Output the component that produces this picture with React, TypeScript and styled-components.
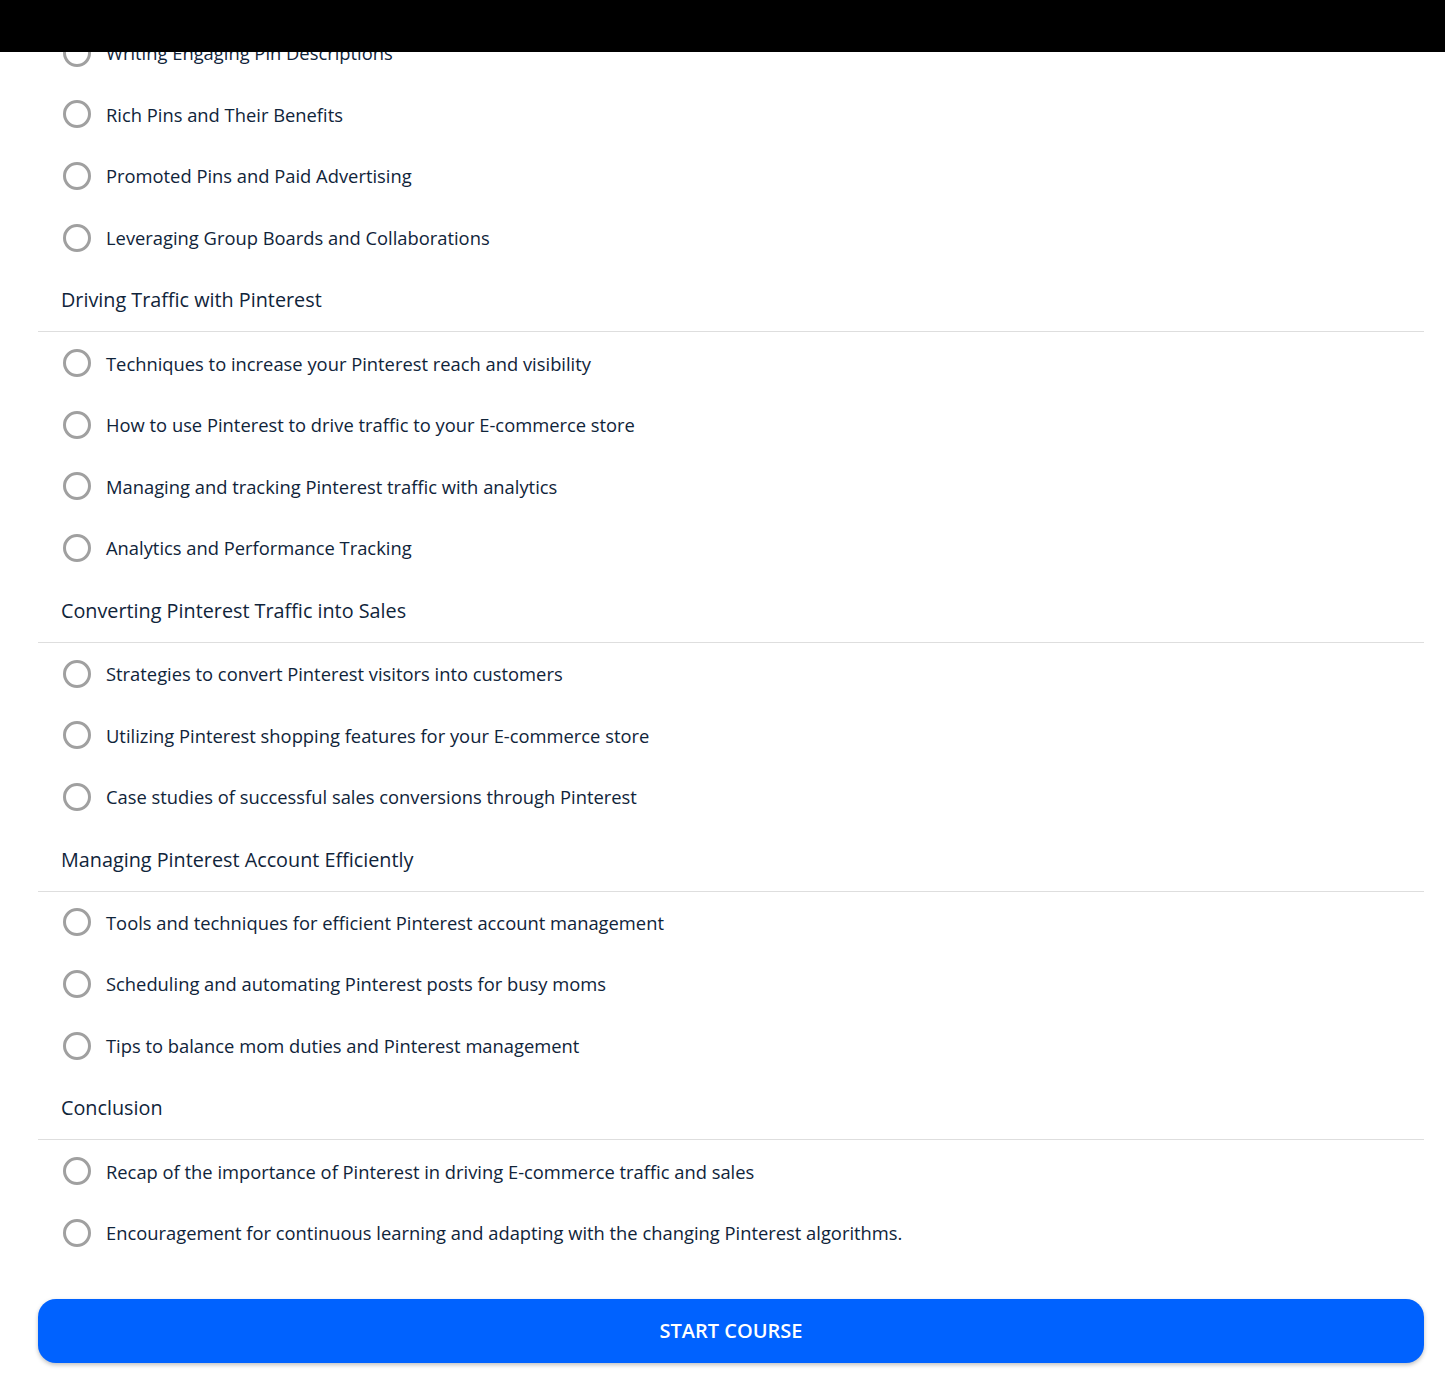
import React from 'react'
import styled, { createGlobalStyle } from 'styled-components'

const GlobalStyle = createGlobalStyle`
  body {
    margin: 0;
    background: #ffffff;
    font-family: 'Open Sans', 'Noto Sans', sans-serif;
    color: #10243a;
  }
`

const TopBar = styled.div`
  position: fixed;
  top: 0;
  left: 0;
  right: 0;
  height: 52px;
  background: #000;
  z-index: 10;
`

const Page = styled.div`
  padding: 22px 21px 0 38px;
  height: 1386px;
  box-sizing: border-box;
`

const List = styled.ul`
  list-style: none;
  margin: 0;
  padding: 0;
`

const Item = styled.li`
  display: flex;
  align-items: center;
  gap: 15px;
  height: 61.6px;
  padding-left: 25px;
  font-size: 18.35px;
`

const Radio = styled.span`
  width: 28px;
  height: 28px;
  box-sizing: border-box;
  border: 3px solid #a0a0a0;
  border-radius: 50%;
  flex: 0 0 auto;
`

const SectionTitle = styled.h3`
  box-sizing: border-box;
  margin: 0;
  height: 64px;
  display: flex;
  align-items: center;
  padding-left: 23px;
  font-size: 19.8px;
  font-weight: 400;
  border-bottom: 1px solid #dedede;
`

const StartButton = styled.button`
  display: block;
  width: 100%;
  height: 64px;
  margin-top: 35px;
  border: none;
  border-radius: 18px;
  background: #0062ff;
  color: #fff;
  font-family: 'Open Sans', 'Noto Sans', sans-serif;
  font-size: 20px;
  font-weight: 600;
  box-shadow: 0 2px 4px rgba(0, 0, 0, 0.25);
  cursor: pointer;
`

const sections: { title?: string; items: string[] }[] = [
  {
    items: [
      'Writing Engaging Pin Descriptions',
      'Rich Pins and Their Benefits',
      'Promoted Pins and Paid Advertising',
      'Leveraging Group Boards and Collaborations',
    ],
  },
  {
    title: 'Driving Traffic with Pinterest',
    items: [
      'Techniques to increase your Pinterest reach and visibility',
      'How to use Pinterest to drive traffic to your E-commerce store',
      'Managing and tracking Pinterest traffic with analytics',
      'Analytics and Performance Tracking',
    ],
  },
  {
    title: 'Converting Pinterest Traffic into Sales',
    items: [
      'Strategies to convert Pinterest visitors into customers',
      'Utilizing Pinterest shopping features for your E-commerce store',
      'Case studies of successful sales conversions through Pinterest',
    ],
  },
  {
    title: 'Managing Pinterest Account Efficiently',
    items: [
      'Tools and techniques for efficient Pinterest account management',
      'Scheduling and automating Pinterest posts for busy moms',
      'Tips to balance mom duties and Pinterest management',
    ],
  },
  {
    title: 'Conclusion',
    items: [
      'Recap of the importance of Pinterest in driving E-commerce traffic and sales',
      'Encouragement for continuous learning and adapting with the changing Pinterest algorithms.',
    ],
  },
]

export default function App() {
  return (
    <>
      <GlobalStyle />
      <TopBar />
      <Page>
        {sections.map((section, i) => (
          <div key={i}>
            {section.title && <SectionTitle>{section.title}</SectionTitle>}
            <List>
              {section.items.map((item) => (
                <Item key={item}>
                  <Radio />
                  {item}
                </Item>
              ))}
            </List>
          </div>
        ))}
        <StartButton>START COURSE</StartButton>
      </Page>
    </>
  )
}
